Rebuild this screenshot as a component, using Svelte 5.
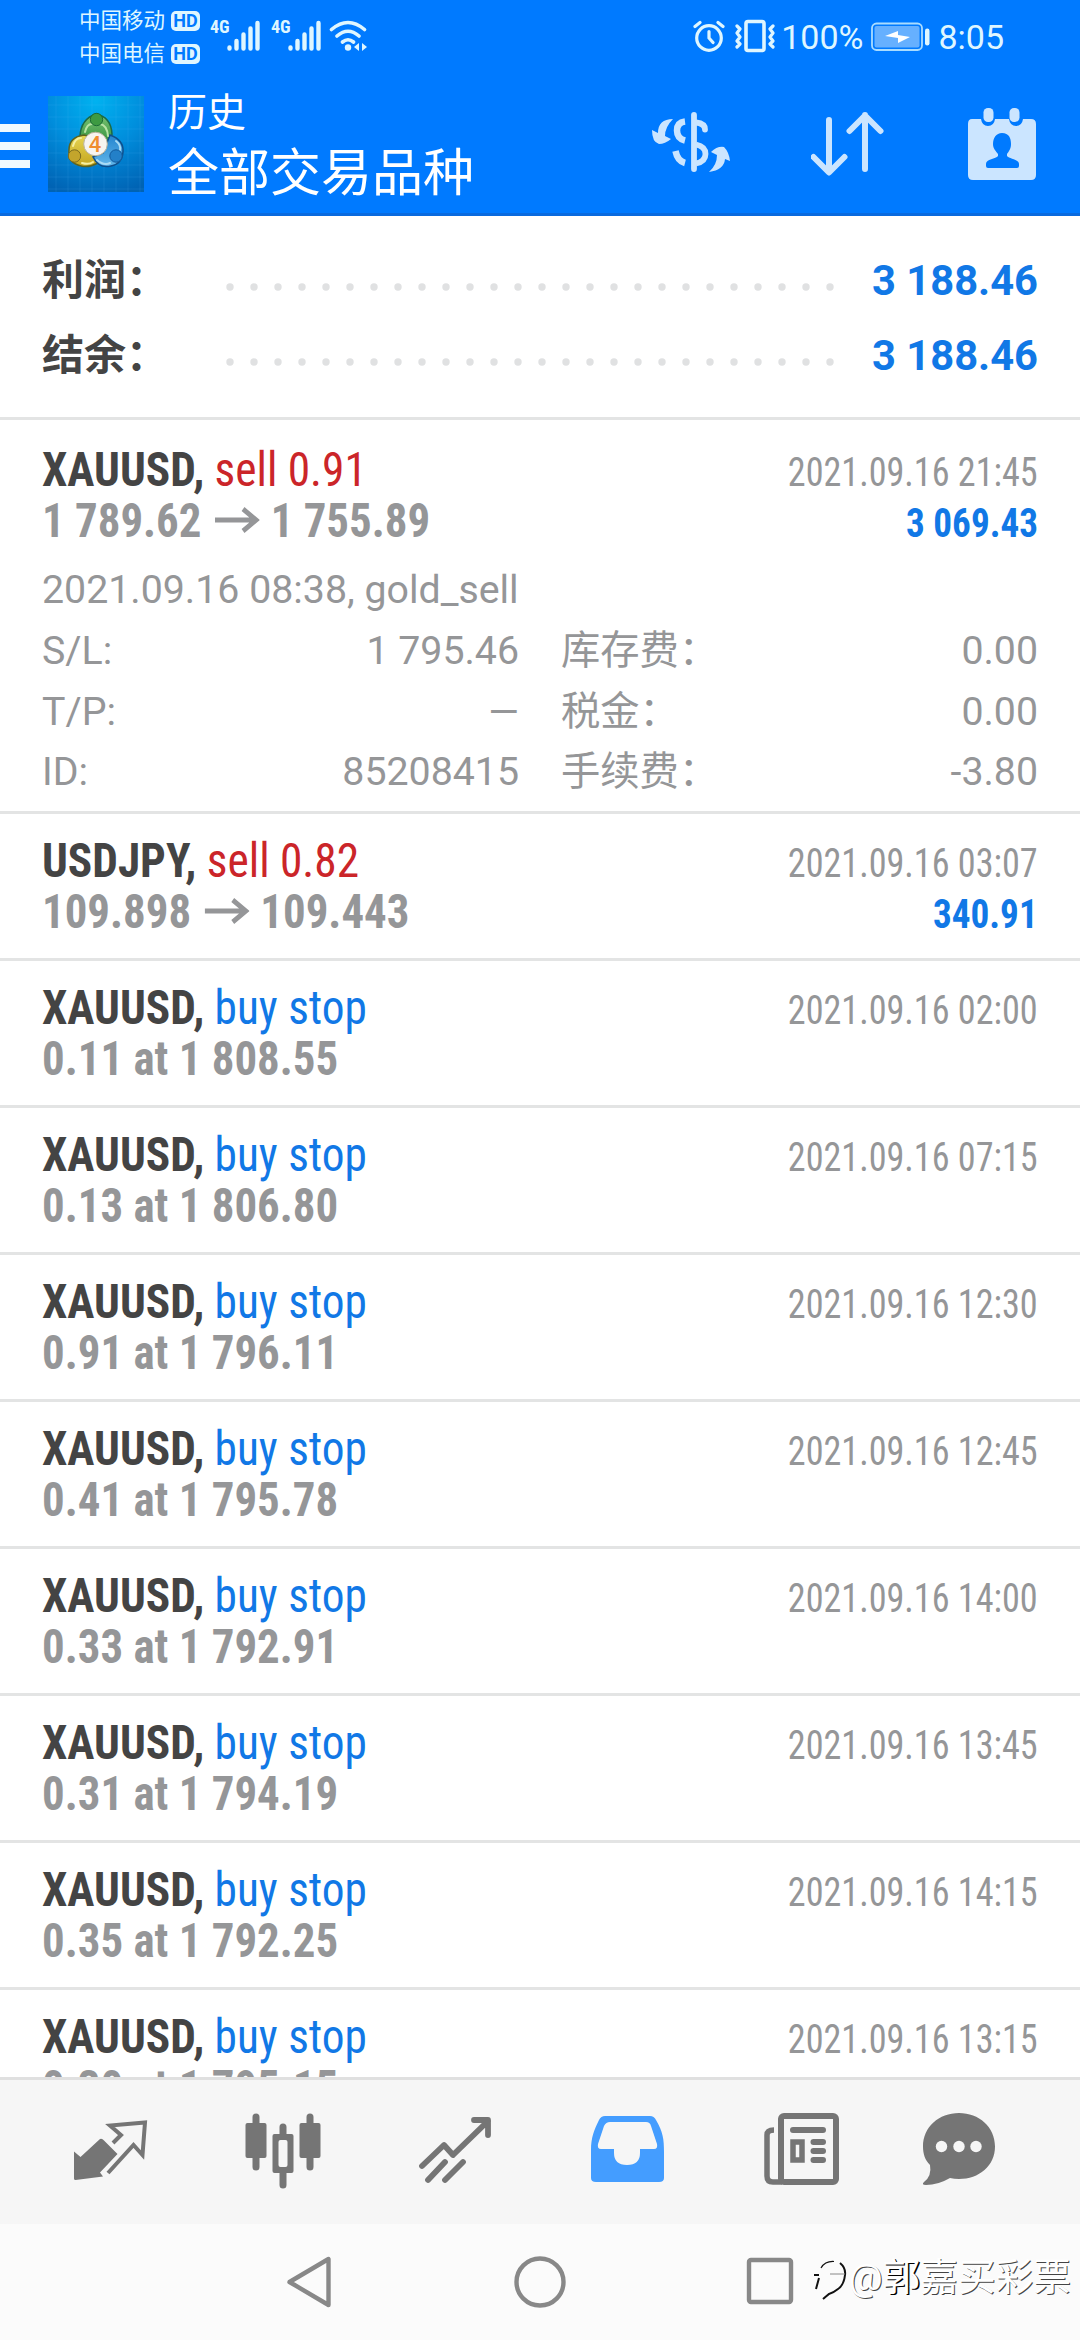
<script lang="ts">
  interface Deal {
    symbol: string;
    action: string;
    side: 'buy' | 'sell';
    time: string;
    price?: string;
    open?: string;
    close?: string;
    profit?: string;
    opened?: string;
    details?: string[][];
  }

  const summary = [
    { label: '利润', value: '3 188.46' },
    { label: '结余', value: '3 188.46' },
  ];

  const deals: Deal[] = [
    {
      symbol: 'XAUUSD',
      action: 'sell 0.91',
      side: 'sell',
      time: '2021.09.16 21:45',
      open: '1 789.62',
      close: '1 755.89',
      profit: '3 069.43',
      opened: '2021.09.16 08:38, gold_sell',
      details: [
        ['S/L:', '1 795.46', '库存费', '0.00'],
        ['T/P:', '—', '税金', '0.00'],
        ['ID:', '85208415', '手续费', '-3.80'],
      ],
    },
    { symbol: 'USDJPY', action: 'sell 0.82', side: 'sell', time: '2021.09.16 03:07', open: '109.898', close: '109.443', profit: '340.91' },
    { symbol: 'XAUUSD', action: 'buy stop', side: 'buy', time: '2021.09.16 02:00', price: '0.11 at 1 808.55' },
    { symbol: 'XAUUSD', action: 'buy stop', side: 'buy', time: '2021.09.16 07:15', price: '0.13 at 1 806.80' },
    { symbol: 'XAUUSD', action: 'buy stop', side: 'buy', time: '2021.09.16 12:30', price: '0.91 at 1 796.11' },
    { symbol: 'XAUUSD', action: 'buy stop', side: 'buy', time: '2021.09.16 12:45', price: '0.41 at 1 795.78' },
    { symbol: 'XAUUSD', action: 'buy stop', side: 'buy', time: '2021.09.16 14:00', price: '0.33 at 1 792.91' },
    { symbol: 'XAUUSD', action: 'buy stop', side: 'buy', time: '2021.09.16 13:45', price: '0.31 at 1 794.19' },
    { symbol: 'XAUUSD', action: 'buy stop', side: 'buy', time: '2021.09.16 14:15', price: '0.35 at 1 792.25' },
    { symbol: 'XAUUSD', action: 'buy stop', side: 'buy', time: '2021.09.16 13:15', price: '0.30 at 1 795.15' },
  ];

  const carriers = ['中国移动', '中国电信'];
  const dots = Array.from({ length: 26 }, (_, i) => 5 + i * 24);
</script>

<div class="phone">
  <header>
    <div class="status">
      <div class="carriers">
        {#each carriers as carrier}
          <div class="carrier">{carrier}<span class="hd">HD</span></div>
        {/each}
      </div>
      {#each carriers as _}
        <div class="signal">
          <span>4G</span>
          <svg width="34" height="32" viewBox="0 0 34 32" stroke="#dff6ff" stroke-width="4.4" stroke-linecap="round">
            <path d="M2.5 27.5v1M9.5 21v7.5M16.5 14.5v14M23.5 8.5v20M30.5 3v25.5" />
          </svg>
        </div>
      {/each}
      <svg class="wifi" width="40" height="32" viewBox="0 0 40 32" fill="none" stroke="#dff6ff" stroke-width="3.6" stroke-linecap="round">
        <path d="M2.5 9.5Q19 -4.5 35.5 9.5M8 16Q19 6.5 30 16M13.5 22Q19 17.5 24.5 22" />
        <circle cx="19" cy="27.5" r="3.2" fill="#dff6ff" stroke="none" />
        <path d="M30 23v8l-5-4zM33 23v8l5-4z" fill="#dff6ff" stroke="none" />
      </svg>
      <div class="status-right">
        <svg width="32" height="32" viewBox="0 0 32 32" fill="none" stroke="#dff6ff" stroke-width="3.2" stroke-linecap="round">
          <circle cx="16" cy="18" r="12.3" />
          <path d="M16 11.5v6.5l4 4.5M2 6.5l5-4M30 6.5l-5-4" />
        </svg>
        <svg class="vibrate" width="42" height="34" viewBox="0 0 42 34" fill="none" stroke="#dff6ff" stroke-width="3.6" stroke-linejoin="round" stroke-linecap="round">
          <rect x="12" y="2.5" width="18" height="29" rx="2" />
          <path stroke-width="3.2" d="M3 7l3 3-3 4 3 4-3 4 3 3-3 3M39 7l-3 3 3 4-3 4 3 4-3 3 3 3" />
        </svg>
        <span class="percent">100%</span>
        <svg class="battery" width="60" height="30" viewBox="0 0 60 30">
          <rect x="1" y="1.5" width="50" height="26.5" rx="4.5" fill="none" stroke="#a9dcff" stroke-width="1.8" />
          <rect x="3.5" y="4" width="45" height="21.5" rx="2" fill="#66b0ff" />
          <path d="M14 14l13-5v4l12 2-12 6v-5z" fill="#fff" />
          <rect x="54" y="6.5" width="4.5" height="17" rx="2.2" fill="#dff6ff" />
        </svg>
        <span class="clock">8:05</span>
      </div>
    </div>
    <div class="bar">
      <div class="menu"><i></i><i></i><i></i></div>
      <svg class="logo" width="96" height="96" viewBox="0 0 96 96">
        <defs>
          <radialGradient id="tile" cx="50%" cy="5%" r="100%">
            <stop offset="0" stop-color="#00b2f0" />
            <stop offset="0.5" stop-color="#008ddc" />
            <stop offset="1" stop-color="#0063b4" />
          </radialGradient>
          <linearGradient id="green" x2="0" y2="1"><stop stop-color="#7cc576" /><stop offset="1" stop-color="#2c8a35" /></linearGradient>
          <linearGradient id="gold" x2="0" y2="1"><stop stop-color="#e6d552" /><stop offset="1" stop-color="#c4a51f" /></linearGradient>
          <linearGradient id="sky" x2="0" y2="1"><stop stop-color="#2384cf" /><stop offset="1" stop-color="#63b7ea" /></linearGradient>
        </defs>
        <rect width="96" height="96" fill="url(#tile)" />
        <path d="M8 0v96M20 0v96M32 0v96M44 0v96M56 0v96M68 0v96M80 0v96M92 0v96M0 9h96M0 21h96M0 33h96M0 45h96M0 57h96M0 69h96M0 81h96M0 93h96" stroke="#5cc4f5" stroke-opacity="0.13" />
        <path d="M48 18q15 3 16 20l-2 12H34l-2-10q1-17 16-22z" fill="url(#green)" stroke="#1d6a45" stroke-width="1.5" />
        <path d="M36 39q-15 2-15 15-1 13 12 16 8 2 17-3l-6-26z" fill="url(#gold)" stroke="#5d6420" stroke-width="1.5" />
        <path d="M62 39q14 5 13 17-1 12-12 14-12 3-18-9l10-4z" fill="url(#sky)" stroke="#0f4f8c" stroke-width="1.5" />
        <path d="M37 36q2-9 8-8M52 28q7 1 8 12" fill="none" stroke="#b7e3a4" stroke-width="2" stroke-linecap="round" />
        <path d="M25 50q2-8 8-8M34 67q7 2 11-1" fill="none" stroke="#f6efa0" stroke-width="2" stroke-linecap="round" />
        <path d="M68 45q5 4 4 9M49 64q7 6 13 3" fill="none" stroke="#a9dbf5" stroke-width="2" stroke-linecap="round" />
        <circle cx="48.5" cy="23.5" r="6.2" fill="#3d9a42" stroke="#1b6a36" />
        <circle cx="26.5" cy="60" r="6.2" fill="#c3a52c" stroke="#7a6a20" />
        <circle cx="68" cy="60" r="6.2" fill="#2380c8" stroke="#125a9c" />
        <circle cx="47.5" cy="48" r="11.8" fill="#f7f4f0" stroke="#b9b39c" />
        <text x="47" y="56" text-anchor="middle" font-family="Roboto, sans-serif" font-size="22" font-weight="500" fill="#ef8d2f">4</text>
      </svg>
      <div class="titles">
        <div class="title">历史</div>
        <div class="subtitle">全部交易品种</div>
      </div>
      <div class="actions">
        <svg width="80" height="72" viewBox="0 0 80 72" fill="none" stroke="#cbe5ff" stroke-width="5.8">
          <path d="M43 8v54" stroke-linecap="round" />
          <path d="M34 14.5q-8 1-8 9t8 10M24.500 44q2 10 9.500 12" stroke-width="6.5" />
          <path d="M45 15.5q9 1 9 7" stroke-linecap="round" />
          <path d="M45 37.5q9.5 2 9.5 9.500T45 56.500" />
          <path d="M22 12Q7 12 7 26L1 23Q1 35 8 37Q14 37 20 32L14 29Q14 20 22 12zM58 65Q73 63 74 52L79 54Q78 45 73 40Q66 39 60 45L66 48Q66 58 58 65z" fill="#cbe5ff" stroke="none" />
        </svg>
        <svg width="76" height="72" viewBox="0 0 76 72" fill="none" stroke="#cbe5ff" stroke-width="6" stroke-linecap="round" stroke-linejoin="round">
          <path d="M18 13v52M2.5 50L18 65.5 33.5 50M54 62V8M38.5 24L54 8.5 69.5 24" />
        </svg>
        <svg width="70" height="74" viewBox="0 0 70 74">
          <path d="M5 12h9q1 7 7 7t7-7h14q1 7 7 7t7-7h8q5 0 5 5v51q0 5-5 5H6q-5 0-5-5V17q0-5 4-5z" fill="#cbe5ff" />
          <rect x="16.5" y="1" width="10" height="14" rx="4.5" fill="#cbe5ff" />
          <rect x="42.5" y="1" width="10" height="14" rx="4.5" fill="#cbe5ff" />
          <path d="M35 26c7 0 9 5 9 11 0 5-2 7-4 10v2c2 3 12 3 12 8v2q0 2-2 2H21q-2 0-2-2v-2c0-5 10-5 12-8v-2c-2-3-5-5-5-10 0-6 3-11 9-11z" fill="#007aff" />
        </svg>
      </div>
    </div>
  </header>

  <section class="summary">
    {#each summary as item}
      <div class="total">
        <b class="label">{item.label}：</b>
        <svg class="dots" width="610" height="10" viewBox="0 0 610 10" fill="#e0e1e2">
          {#each dots as x}
            <circle cx={x} cy="5" r="3.7" />
          {/each}
        </svg>
        <b class="amount">{item.value}</b>
      </div>
    {/each}
  </section>

  <main>
    {#each deals as deal}
      <article class:open={deal.details}>
        <div class="line">
          <div class="name"><b>{deal.symbol},</b> <span class={deal.side}>{deal.action}</span></div>
          <div class="time">{deal.time}</div>
        </div>
        <div class="line">
          {#if deal.price}
            <b class="price">{deal.price}</b>
          {:else}
            <b class="price">{deal.open}<svg class="arrow" width="48" height="26" viewBox="0 0 48 26" fill="none" stroke="#959698" stroke-width="5"><path d="M0 13h44M30 2l14 11-14 11" /></svg>{deal.close}</b>
            <b class="profit">{deal.profit}</b>
          {/if}
        </div>
        {#if deal.details}
          <div class="details">
            <div class="opened">{deal.opened}</div>
            {#each deal.details as [key, value, fee, cost]}
              <div class="cell"><span>{key}</span><span>{value}</span></div>
              <div class="cell"><span>{fee}：</span><span>{cost}</span></div>
            {/each}
          </div>
        {/if}
      </article>
    {/each}
  </main>

  <nav class="tabs">
    <svg width="76" height="76" viewBox="0 0 76 76">
      <path d="M31 27.5L44.5 41 27 59.5l3 4L2.5 67Q1 67 1 65.5V38.5L7.5 44 27 26q2-1 4 1.5z" fill="#757575" />
      <path d="M40 30l8-8-11-9.5L72 9.5 69.5 42l-9-10L35 60" fill="none" stroke="#757575" stroke-width="4" />
    </svg>
    <svg width="76" height="76" viewBox="0 0 76 76" fill="#757575">
      <path d="M11 4v50M65 4v50M38 14v58" stroke="#757575" stroke-width="7" stroke-linecap="round" />
      <rect x="0.5" y="10" width="21" height="35" rx="2" />
      <rect x="54.5" y="10" width="21" height="35" rx="2" />
      <rect x="27.5" y="21" width="21" height="39" rx="2" />
      <rect x="33.5" y="27" width="9" height="27" rx="2" fill="#f6f6f6" />
    </svg>
    <svg width="76" height="76" viewBox="0 0 76 76" fill="none" stroke="#757575" stroke-width="5.8" stroke-linecap="round" stroke-linejoin="round">
      <path d="M4 53l22-21 9 10L70 8M56 7h14v15M10 67l17-18M27 67l18-18" />
    </svg>
    <svg width="76" height="76" viewBox="0 0 76 76">
      <path d="M15 3h45q4 0 6 4c7 12 8 19 8 32v26q0 4-5 4H6q-5 0-5-4V37C1 25 4 17 9 7q2-4 6-4z" fill="#449dff" />
      <path d="M20 9h36q4 0 5 4l6 18q1 5-3 5H50v4q0 12-13 12T24 40v-4H11q-4 0-3-5l6-18q2-4 6-4z" fill="#f6f6f6" />
    </svg>
    <svg width="76" height="76" viewBox="0 0 76 76" fill="none" stroke="#757575" stroke-width="6">
      <rect x="18" y="3" width="55" height="66" rx="3" />
      <path d="M11 17q-7 0-7 5v41q0 6 6 6h9" stroke-width="5.5" />
      <path d="M30 17h30M50.5 29h9.5M50.5 38h9.5M50.5 47h9.5" stroke-linecap="round" />
      <rect x="30" y="29" width="9" height="18" stroke-width="5.5" />
    </svg>
    <svg class="chat" width="76" height="76" viewBox="0 0 76 76">
      <path d="M38 0C58 0 74 14 74 33.5S58 66 38 66q-5 0-9-1-12 7-24 7-5 0-2-3 8-6 6-17C4 47 2 41 2 33.5 2 14 18 0 38 0z" fill="#757575" />
      <circle cx="20.5" cy="33.5" r="5.7" fill="#f6f6f6" />
      <circle cx="38" cy="33.5" r="5.7" fill="#f6f6f6" />
      <circle cx="55" cy="33.5" r="5.7" fill="#f6f6f6" />
    </svg>
  </nav>

  <footer>
    <svg width="52" height="54" viewBox="0 0 52 54" fill="none" stroke="#888" stroke-width="4.4" stroke-linejoin="round">
      <path d="M43.5 4v46L4.500 27z" />
    </svg>
    <svg width="54" height="54" viewBox="0 0 54 54" fill="none" stroke="#888" stroke-width="4.4">
      <circle cx="27" cy="27" r="23.5" />
    </svg>
    <svg width="52" height="54" viewBox="0 0 52 54" fill="none" stroke="#888" stroke-width="4.4">
      <rect x="6" y="5" width="42" height="42" rx="2" />
    </svg>
    <div class="watermark">
      <svg width="38" height="52" viewBox="0 0 38 52" fill="none" stroke="#111">
        <path d="M10 17Q14 10 23 10.500" stroke-width="1.2" />
        <path d="M29 12Q35 17 34 24Q33 34 27 38Q22 42 18 43L12 48M3 24h5M8 27L5 38" stroke-width="2" />
        <path d="M19 23h15" stroke="#888" />
      </svg>
      <span>@<b>郭</b>嘉买彩票</span>
    </div>
  </footer>
</div>

<style>
  :global(body) {
    margin: 0;
  }

  .phone {
    width: 1080px;
    height: 2340px;
    display: flex;
    flex-direction: column;
    overflow: hidden;
    background: #fff;
    font-family: Roboto, "Noto Sans CJK SC", sans-serif;
  }

  svg {
    display: block;
    flex: none;
  }

  header {
    box-sizing: border-box;
    flex: none;
    height: 216px;
    background: #007aff;
    border-bottom: 3px solid #0a6ade;
    color: #fff;
  }

  .status {
    display: flex;
    height: 72px;
    padding: 0 76px 0 79px;
    align-items: center;
    color: #dff6ff;
  }

  .carriers {
    width: 131px;
    padding-top: 2px;
    font-size: 21.5px;
    line-height: 33px;
  }

  .carrier {
    display: flex;
    align-items: center;
    gap: 6px;
  }

  .hd {
    width: 29px;
    height: 20px;
    border-radius: 5px;
    background: #dff6ff;
    color: #007aff;
    font-size: 18px;
    font-weight: 700;
    line-height: 20px;
    text-align: center;
  }

  .signal {
    display: flex;
    width: 61px;
  }

  .signal span {
    width: 17px;
    font-family: "Roboto Condensed", Roboto, sans-serif;
    font-stretch: condensed;
    font-size: 18px;
    font-weight: 700;
    line-height: 14px;
  }

  .wifi {
    margin-left: -3px;
  }

  .status-right {
    display: flex;
    align-items: center;
    margin-left: auto;
    font-size: 34px;
  }

  .vibrate {
    margin-left: 9px;
  }

  .percent {
    margin-left: 5px;
    padding-top: 2px;
  }

  .clock {
    padding-top: 2px;
  }

  .battery {
    margin: 2px 7px 0 8px;
  }

  .bar {
    display: flex;
    height: 141px;
  }

  .menu {
    width: 30px;
    margin: 52px 18px 0 0;
  }

  .menu i {
    display: block;
    height: 8px;
    margin-bottom: 10px;
    background: #f0f9ff;
  }

  .logo {
    margin-top: 24px;
  }

  .titles {
    padding: 18px 0 0 24px;
  }

  .title {
    font-size: 39px;
    line-height: 46px;
  }

  .subtitle {
    margin-top: 8px;
    font-size: 51px;
    line-height: 60px;
  }

  .actions {
    display: flex;
    margin: 35px 43px 0 auto;
    gap: 80px;
  }

  .summary {
    flex: none;
    box-sizing: border-box;
    height: 204px;
    padding: 27px 42px 0;
    border-bottom: 3px solid #e3e4e4;
    font-size: 42px;
    line-height: 75px;
  }

  .total {
    display: flex;
    align-items: center;
    height: 75px;
  }

  .label {
    width: 183px;
    color: #444;
  }

  .dots {
    margin-top: 13px;
  }

  .amount {
    margin-left: auto;
    color: #1178e6;
    font-size: 41.7px;
  }

  main {
    flex: 1;
    min-height: 0;
    overflow: hidden;
  }

  article {
    padding: 21px 42px;
    border-bottom: 3px solid #e3e4e4;
  }

  article.open {
    padding: 24px 42px 8px;
  }

  .line {
    display: flex;
    align-items: baseline;
    justify-content: space-between;
    height: 51px;
    line-height: 51px;
    font-family: "Roboto Condensed", Roboto, sans-serif;
    font-stretch: condensed;
    font-size: 48px;
    white-space: pre;
  }

  /* squeeze the condensed face a little further */
  .name,
  .price {
    transform: scaleX(0.935);
    transform-origin: left;
  }

  .name {
    transform: scaleX(0.944);
  }

  .time,
  .profit {
    font-size: 40px;
    transform: scaleX(0.903);
    transform-origin: right;
  }

  .profit {
    transform: scaleX(0.93);
    color: #1178e6;
  }

  .name b {
    color: #444;
  }

  .sell {
    color: #cb2529;
  }

  .buy {
    color: #1178e6;
  }

  .time,
  .price {
    color: #959698;
  }

  .arrow {
    display: inline-block;
    margin: 0 12px 0 14px;
    vertical-align: 4px;
  }

  .details {
    display: grid;
    grid-template-columns: 477px 477px;
    justify-content: space-between;
    margin-top: 14px;
    color: #959698;
    font-size: 39.3px;
    line-height: 60.75px;
  }

  .opened {
    grid-column: 1 / 3;
  }

  .cell {
    display: flex;
    justify-content: space-between;
  }

  .tabs {
    box-sizing: border-box;
    display: flex;
    flex: none;
    gap: 96.4px;
    height: 147px;
    padding: 33px 0 0 73px;
    border-top: 3px solid #e0e0e0;
    background: #f6f6f6;
  }

  .chat {
    margin-left: -14px;
  }

  footer {
    position: relative;
    display: flex;
    flex: none;
    box-sizing: border-box;
    height: 116px;
    padding: 31px 285px 0 285px;
    justify-content: space-between;
    background: #fbfbfb;
  }

  .watermark {
    position: absolute;
    top: 27px;
    right: 9px;
    display: flex;
    color: #fff;
    font-size: 37.7px;
    line-height: 52px;
    text-shadow: 1px 1px 0 #444;
  }

  .watermark b {
    font-weight: 400;
    text-shadow: 1.5px 1px 0 #000;
  }
</style>
